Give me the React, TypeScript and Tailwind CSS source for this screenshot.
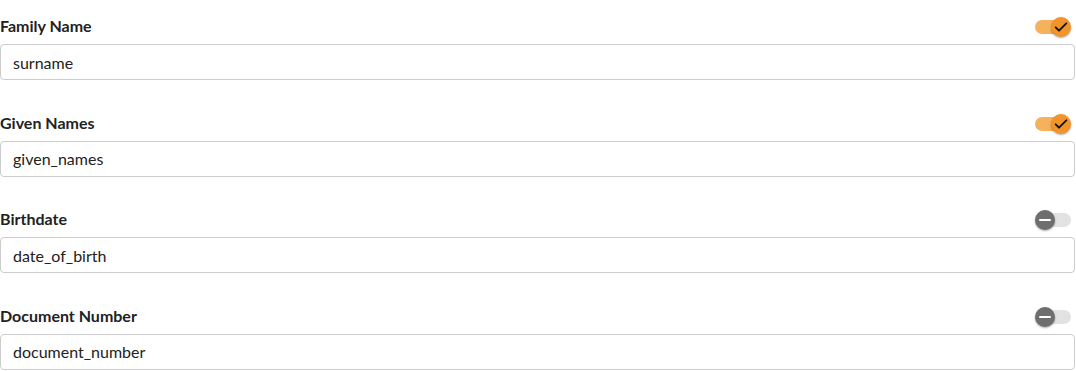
import React, { useState } from 'react';

type Field = { id: string; label: string; value: string; enabled: boolean };

const initial: Field[] = [
  { id: 'surname', label: 'Family Name', value: 'surname', enabled: true },
  { id: 'given_names', label: 'Given Names', value: 'given_names', enabled: true },
  { id: 'date_of_birth', label: 'Birthdate', value: 'date_of_birth', enabled: false },
  { id: 'document_number', label: 'Document Number', value: 'document_number', enabled: false },
];

const Toggle: React.FC<{ on: boolean; onChange: () => void }> = ({ on, onChange }) => (
  <button
    type="button"
    onClick={onChange}
    className="relative w-[36px] h-[20px] mr-[4px] flex items-center"
  >
    <span
      className={
        on
          ? 'absolute left-0 right-[4px] h-[14px] rounded-full bg-[#f6b15c]'
          : 'absolute left-[4px] right-0 h-[14px] rounded-full bg-[#e2e2e2]'
      }
    />
    <span
      className={
        on
          ? 'absolute right-0 w-[20px] h-[20px] rounded-full bg-[#f1952b] shadow-[0_1px_2px_rgba(0,0,0,0.35)] flex items-center justify-center'
          : 'absolute left-0 w-[20px] h-[20px] rounded-full bg-[#6e6e6e] shadow-[0_1px_2px_rgba(0,0,0,0.35)] flex items-center justify-center'
      }
    >
      {on ? (
        <svg width="16" height="16" viewBox="0 0 24 24" fill="none" stroke="#111" strokeWidth="2.8" strokeLinecap="round" strokeLinejoin="round">
          <path d="M4 12.5l5 5L20 6.5" />
        </svg>
      ) : (
        <span className="block w-[12px] h-[2px] bg-white rounded" />
      )}
    </span>
  </button>
);

export default function App() {
  const [fields, setFields] = useState(initial);

  const toggle = (id: string) =>
    setFields((f) => f.map((x) => (x.id === id ? { ...x, enabled: !x.enabled } : x)));

  return (
    <div className="w-[1076px] h-[371px] bg-white pt-[16px] font-['Lato','Liberation_Sans',sans-serif] overflow-hidden">
      {fields.map((f, i) => (
        <div key={f.id} className={i === 0 ? 'pr-px' : 'pr-px mt-[32.5px]'}>
          <div className="flex items-center justify-between h-[22px]">
            <label className="text-[16px] font-bold text-[#222] -translate-y-px">{f.label}</label>
            <Toggle on={f.enabled} onChange={() => toggle(f.id)} />
          </div>
          <input
            readOnly
            value={f.value}
            className="mt-[6px] block w-full h-[36px] px-[12px] border border-[#cccccc] rounded-[4px] text-[16px] text-[#222] outline-none"
          />
        </div>
      ))}
    </div>
  );
}
